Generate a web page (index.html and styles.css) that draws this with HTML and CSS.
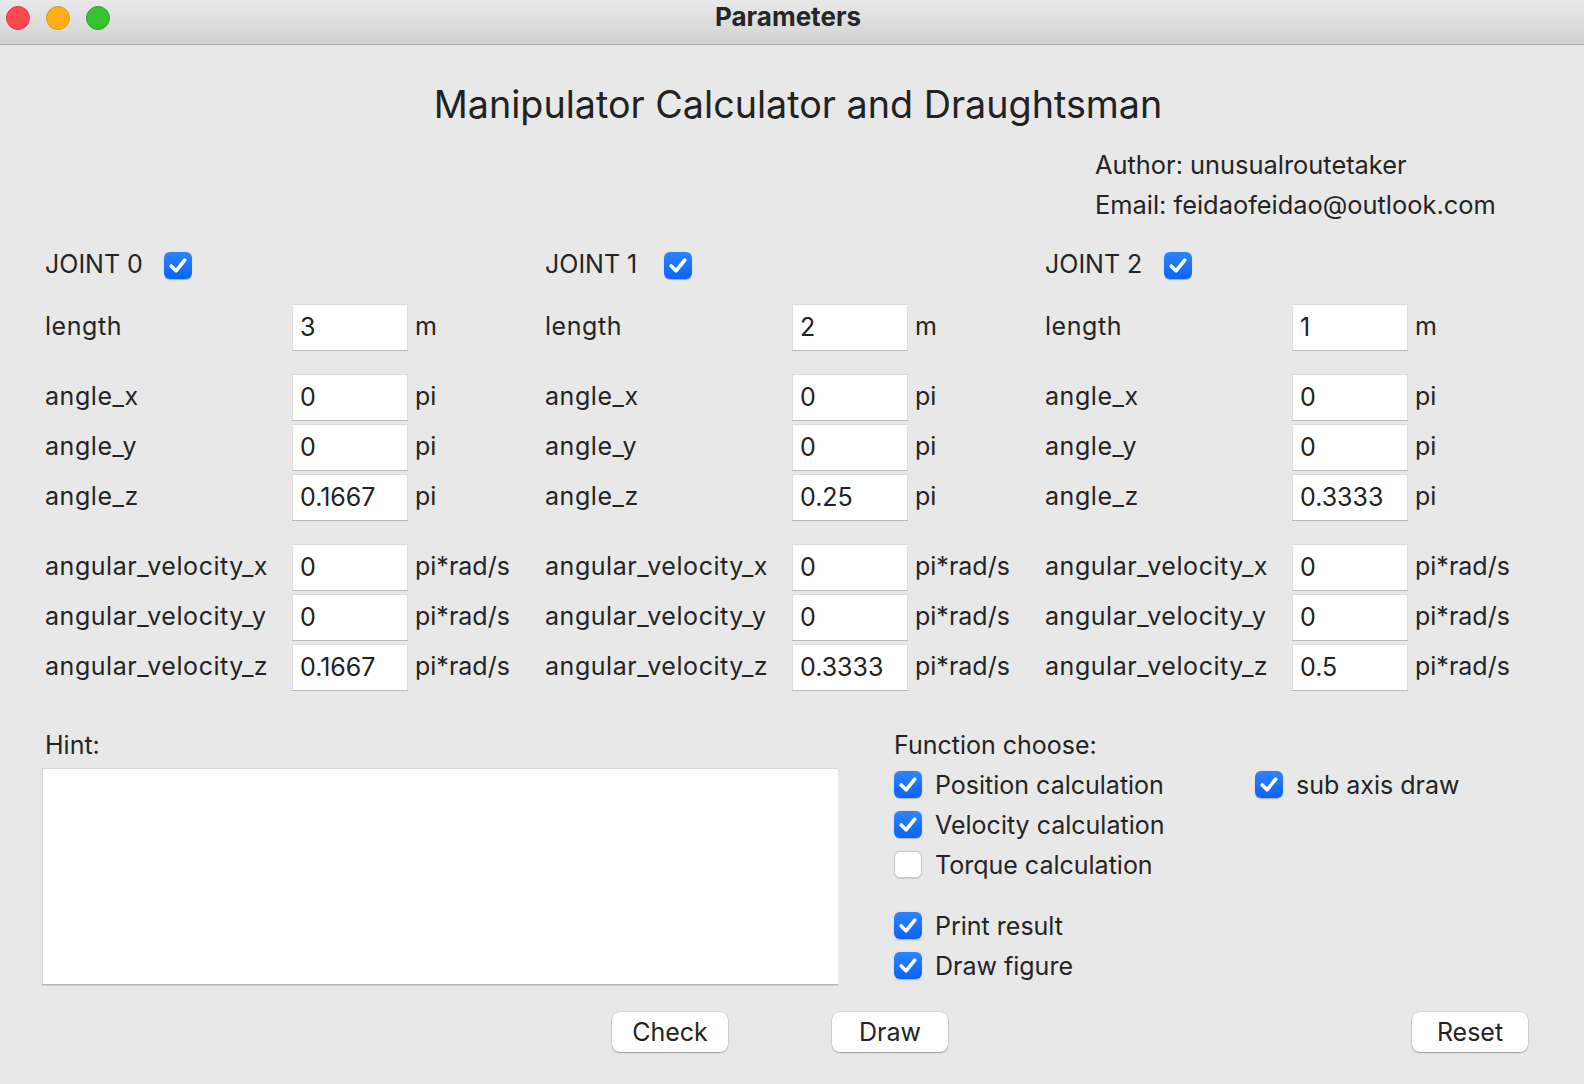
FILE: index.html
```html
<!DOCTYPE html>
<html>
<head>
<meta charset="utf-8">
<title>Parameters</title>
<link rel="stylesheet" href="styles.css">
</head>
<body>
<div class="window">
  <div class="titlebar">
    <div class="lights">
      <span class="light red"></span>
      <span class="light yellow"></span>
      <span class="light green"></span>
    </div>
    <div class="wtitle">Parameters</div>
    <div></div>
  </div>

  <div class="content">
    <h1 class="heading">Manipulator Calculator and Draughtsman</h1>
    <div class="author">
      <div>Author: unusualroutetaker</div>
      <div>Email: feidaofeidao@outlook.com</div>
    </div>

    <div class="joints">
      <div class="joint">
        <div class="jhead"><span>JOINT 0</span><span class="cb on"><svg viewBox="0 0 28 28"><path d="M7 14.5 L12 19.5 L21 8.5"/></svg></span></div>
        <div class="row first"><span class="lbl">length</span><span class="inp">3</span><span class="unit">m</span></div>
        <div class="group">
          <div class="row"><span class="lbl">angle_x</span><span class="inp">0</span><span class="unit">pi</span></div>
          <div class="row"><span class="lbl">angle_y</span><span class="inp">0</span><span class="unit">pi</span></div>
          <div class="row"><span class="lbl">angle_z</span><span class="inp">0.1667</span><span class="unit">pi</span></div>
        </div>
        <div class="group">
          <div class="row"><span class="lbl">angular_velocity_x</span><span class="inp">0</span><span class="unit">pi*rad/s</span></div>
          <div class="row"><span class="lbl">angular_velocity_y</span><span class="inp">0</span><span class="unit">pi*rad/s</span></div>
          <div class="row"><span class="lbl">angular_velocity_z</span><span class="inp">0.1667</span><span class="unit">pi*rad/s</span></div>
        </div>
      </div>
      <div class="joint">
        <div class="jhead"><span>JOINT 1</span><span class="cb on"><svg viewBox="0 0 28 28"><path d="M7 14.5 L12 19.5 L21 8.5"/></svg></span></div>
        <div class="row first"><span class="lbl">length</span><span class="inp">2</span><span class="unit">m</span></div>
        <div class="group">
          <div class="row"><span class="lbl">angle_x</span><span class="inp">0</span><span class="unit">pi</span></div>
          <div class="row"><span class="lbl">angle_y</span><span class="inp">0</span><span class="unit">pi</span></div>
          <div class="row"><span class="lbl">angle_z</span><span class="inp">0.25</span><span class="unit">pi</span></div>
        </div>
        <div class="group">
          <div class="row"><span class="lbl">angular_velocity_x</span><span class="inp">0</span><span class="unit">pi*rad/s</span></div>
          <div class="row"><span class="lbl">angular_velocity_y</span><span class="inp">0</span><span class="unit">pi*rad/s</span></div>
          <div class="row"><span class="lbl">angular_velocity_z</span><span class="inp">0.3333</span><span class="unit">pi*rad/s</span></div>
        </div>
      </div>
      <div class="joint">
        <div class="jhead"><span>JOINT 2</span><span class="cb on"><svg viewBox="0 0 28 28"><path d="M7 14.5 L12 19.5 L21 8.5"/></svg></span></div>
        <div class="row first"><span class="lbl">length</span><span class="inp">1</span><span class="unit">m</span></div>
        <div class="group">
          <div class="row"><span class="lbl">angle_x</span><span class="inp">0</span><span class="unit">pi</span></div>
          <div class="row"><span class="lbl">angle_y</span><span class="inp">0</span><span class="unit">pi</span></div>
          <div class="row"><span class="lbl">angle_z</span><span class="inp">0.3333</span><span class="unit">pi</span></div>
        </div>
        <div class="group">
          <div class="row"><span class="lbl">angular_velocity_x</span><span class="inp">0</span><span class="unit">pi*rad/s</span></div>
          <div class="row"><span class="lbl">angular_velocity_y</span><span class="inp">0</span><span class="unit">pi*rad/s</span></div>
          <div class="row"><span class="lbl">angular_velocity_z</span><span class="inp">0.5</span><span class="unit">pi*rad/s</span></div>
        </div>
      </div>
    </div>

    <div class="lower">
      <div class="hint">
        <div class="hlabel">Hint:</div>
        <div class="textarea"></div>
      </div>
      <div class="func">
        <div class="flabel">Function choose:</div>
        <div class="fgrid">
          <div class="fcol">
            <div class="opt"><span class="cb on"><svg viewBox="0 0 28 28"><path d="M7 14.5 L12 19.5 L21 8.5"/></svg></span><span>Position calculation</span></div>
            <div class="opt"><span class="cb on"><svg viewBox="0 0 28 28"><path d="M7 14.5 L12 19.5 L21 8.5"/></svg></span><span>Velocity calculation</span></div>
            <div class="opt"><span class="cb off"></span><span>Torque calculation</span></div>
            <div class="opt spaced"><span class="cb on"><svg viewBox="0 0 28 28"><path d="M7 14.5 L12 19.5 L21 8.5"/></svg></span><span>Print result</span></div>
            <div class="opt"><span class="cb on"><svg viewBox="0 0 28 28"><path d="M7 14.5 L12 19.5 L21 8.5"/></svg></span><span>Draw figure</span></div>
          </div>
          <div class="fcol">
            <div class="opt"><span class="cb on"><svg viewBox="0 0 28 28"><path d="M7 14.5 L12 19.5 L21 8.5"/></svg></span><span>sub axis draw</span></div>
          </div>
        </div>
      </div>
    </div>

    <div class="buttons">
      <button class="btn">Check</button>
      <button class="btn draw">Draw</button>
      <button class="btn reset">Reset</button>
    </div>
  </div>
</div>
</body>
</html>
```

FILE: styles.css
```css
* { box-sizing: border-box; }
html, body { margin: 0; padding: 0; }
body {
  width: 1584px;
  height: 1084px;
  background: #e8e8e8;
  font-family: Inter, "Noto Sans", "Liberation Sans", sans-serif;
  color: #242424;
  overflow: hidden;
}
.window { width: 1584px; height: 1084px; }

.titlebar {
  height: 45px;
  display: grid;
  grid-template-columns: 1fr auto 1fr;
  align-items: start;
  background: linear-gradient(#e9e9e9, #d3d3d3);
  border-bottom: 1px solid #afafaf;
}
.lights { display: flex; gap: 16px; padding: 6px 0 0 6px; }
.light { width: 24px; height: 24px; border-radius: 50%; display: block; }
.red { background: #fd4a50; border: 1px solid #df3b3f; }
.yellow { background: #fdb01a; border: 1px solid #dc9613; }
.green { background: #36c22c; border: 1px solid #2aa622; }
.wtitle {
  font-weight: 700;
  font-size: 26px;
  line-height: 34px;
  color: #262626;
  padding-right: 8px;
}

.content { position: relative; }
.heading {
  margin: 0;
  padding: 37px 0 0 12px;
  font-size: 37.7px;
  font-weight: 400;
  line-height: 44px;
  text-align: center;
  color: #222;
}
.author {
  margin-top: 19px;
  padding-left: 1095px;
  font-size: 25.4px;
  line-height: 40px;
}

.joints {
  display: grid;
  grid-template-columns: 500px 500px 500px;
  padding-left: 45px;
  margin-top: 26px;
  font-size: 25px;
}
.jhead {
  height: 28px;
  display: flex;
  align-items: center;
}
.jhead span:first-child { width: 119px; padding-bottom: 2px; }
.row {
  display: grid;
  grid-template-columns: 247px 116px auto;
  align-items: center;
  height: 46px;
}
.row.first { margin-top: 25px; }
.group { margin-top: 24px; display: flex; flex-direction: column; gap: 4px; }
.lbl { white-space: nowrap; letter-spacing: 0.55px; padding-bottom: 3px; }
.inp {
  height: 46px;
  background: #fff;
  display: flex;
  align-items: center;
  padding-left: 7px;
  padding-bottom: 2px;
  border-top: 1px solid #dcdcdc;
  border-left: 1px solid #e0e0e0;
  border-right: 1px solid #e0e0e0;
  box-shadow: 0 1px 0 #b9b9b9;
  color: #222;
}
.unit { padding-left: 7px; white-space: nowrap; padding-bottom: 3px; }

.cb {
  width: 28px;
  height: 27px;
  border-radius: 6px;
  display: inline-flex;
  align-items: center;
  justify-content: center;
  flex: none;
}
.cb.on {
  background: linear-gradient(#2d83ff, #0b64f4);
  box-shadow: 0 0.5px 1px rgba(0,0,0,0.25);
}
.cb.off {
  background: #fff;
  border: 1px solid #c9c9c9;
  box-shadow: 0 0.5px 1px rgba(0,0,0,0.12);
}
.cb svg { width: 28px; height: 27px; }
.cb svg path {
  fill: none;
  stroke: #fff;
  stroke-width: 3.8;
  stroke-linecap: round;
  stroke-linejoin: round;
}

.lower {
  display: grid;
  grid-template-columns: 852px auto;
  padding-left: 42px;
  margin-top: 40px;
  font-size: 25px;
}
.hlabel { height: 30px; line-height: 30px; padding-left: 3px; }
.textarea {
  margin-top: 8px;
  width: 796px;
  height: 216px;
  background: #fff;
  border-left: 1px solid #d0d0d0;
  border-top: 1px solid #d8d8d8;
  box-shadow: 0 1.5px 0 #b5b5b5;
}
.flabel { height: 30px; line-height: 30px; }
.fgrid {
  display: grid;
  grid-template-columns: 361px auto;
  margin-top: 10px;
}
.fcol { display: flex; flex-direction: column; gap: 12px; }
.opt {
  height: 28px;
  display: flex;
  align-items: center;
  gap: 13px;
  white-space: nowrap;
}
.opt span:last-child { padding-top: 2px; }
.opt.spaced { margin-top: 21px; }

.buttons {
  display: flex;
  margin-top: 28px;
  padding-left: 612px;
  padding-right: 56px;
}
.btn {
  width: 116px;
  height: 40px;
  border: none;
  border-radius: 8px;
  background: #fff;
  box-shadow: 0 0 0 0.5px rgba(0,0,0,0.12), 0 1px 1.5px rgba(0,0,0,0.28);
  font-family: Inter, "Noto Sans", "Liberation Sans", sans-serif;
  font-size: 25px;
  color: #242424;
  padding: 0;
}
.btn.draw { margin-left: 104px; }
.btn.reset { margin-left: auto; }
```
